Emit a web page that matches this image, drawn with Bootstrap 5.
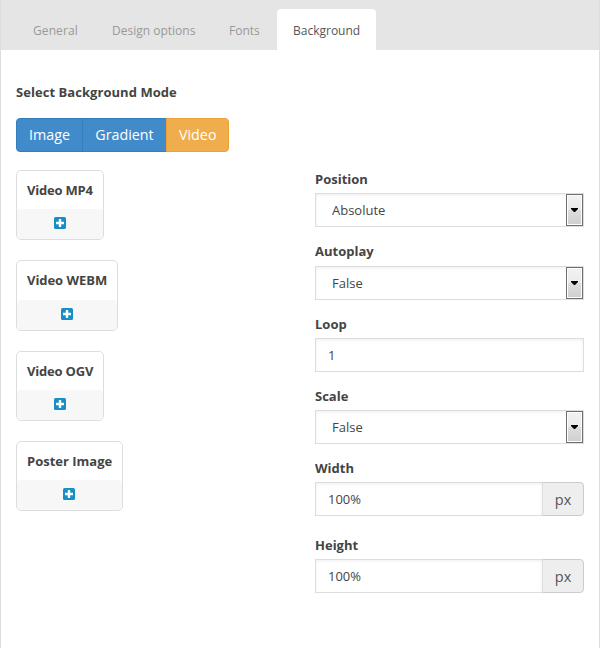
<!DOCTYPE html>
<html lang="en">
<head>
<meta charset="utf-8">
<meta name="viewport" content="width=device-width, initial-scale=1">
<title>Background settings</title>
<link href="https://cdn.jsdelivr.net/npm/bootstrap@5.3.0/dist/css/bootstrap.min.css" rel="stylesheet">
<style>
body { font-family: "Open Sans", sans-serif; font-size: 13px; line-height: 20px; color: #444; background: #fff; }
.panel { height: 648px; border: solid #ddd; border-width: 0 1px; overflow: hidden; }
.tabs-bar { height: 50px; background: #e5e5e5; padding: 9px 16px 0; gap: 2px; border: 0; }
.tabs-bar .nav-link { height: 41px; border: 0; margin: 0; padding: 12px 16px 0; color: #999; border-radius: 4px 4px 0 0; font-size: 12px; line-height: 20px; white-space: nowrap; }
.tabs-bar .nav-link:first-child { width: 77px; letter-spacing: .1px; }
.tabs-bar .nav-link:nth-child(2) { width: 115px; }
.tabs-bar .nav-link:nth-child(3) { width: 62px; }
.tabs-bar .nav-link.active { width: 99px; color: #555; background: #fff; }
.panel-body { padding: 32px 15px 0; }
.heading { letter-spacing: .05px; }
.mode-group { margin: 16px 0 18px; height: 34px; }
.mode-group .btn { font-size: 14.3px; line-height: 20px; padding: 6px 12px; color: #fff; border-radius: 4px; }
.mode-group .btn:nth-child(2) { width: 85px; }
.btn-mode { --bs-btn-bg: #428bca; --bs-btn-border-color: #357ebd; --bs-btn-hover-bg: #3276b1; }
.btn-mode-on { --bs-btn-bg: #f0ad4e; --bs-btn-border-color: #eea236; --bs-btn-hover-bg: #ed9c28; }
.sources { width: 299px; gap: 20px; }
.source { height: 70px; border: 1px solid #ddd; border-radius: 5px; overflow: hidden; }
.source-narrow { width: 88px; letter-spacing: -.2px; }
.source-tall { width: 102px; height: 71px; letter-spacing: -.05px; }
.source-title { height: 38px; padding: 9px 10px 0; line-height: 20px; white-space: nowrap; }
.source-tall .source-title { height: 39px; }
.source-add { background: #f7f7f7; border-radius: 4px 4px 0 0; padding-bottom: 2px; }
.source:last-child .source-add { padding-right: 1px; }
.fields { width: 269px; }
.field { margin-bottom: 15px; }
.field-wide { margin-bottom: 20px; }
.field label { display: block; height: 23px; line-height: 18px; font-weight: 700; }
.field .label-tall { height: 24px; }
.field .form-control, .pick { height: 34px; border: 1px solid #ddd; border-radius: 0; background: #fff; box-shadow: inset 0 1px 3px rgba(0,0,0,.07); }
.field .form-control { font-size: 13px; line-height: 20px; padding: 6px 12px; color: #444; }
.pick select { appearance: none; border: 0; outline: 0; background: transparent; color: #444; padding: 0 16px; }
.pick-arrow { width: 17px; border: 1px solid #707070; background: linear-gradient(#f2f2f2 0, #ebebeb 50%, #dddddd 50%, #cfcfcf 100%); box-shadow: inset 0 0 0 1px #fcfcfc; }
.unit { width: 42px; font-size: 14.5px; padding: 1px 0 0; justify-content: center; color: #555; background: #eee; border: 1px solid #ccc; border-radius: 0 4px 4px 0; }
.field .input-group { height: 34px; }
</style>
</head>
<body>
<main class="panel">
  <nav class="nav nav-tabs tabs-bar flex-nowrap">
    <a class="nav-link" href="#">General</a>
    <a class="nav-link" href="#">Design options</a>
    <a class="nav-link" href="#">Fonts</a>
    <a class="nav-link active" href="#">Background</a>
  </nav>
  <section class="panel-body">
    <div class="fw-bold heading">Select Background Mode</div>
    <div class="btn-group mode-group">
      <button type="button" class="btn btn-mode">Image</button>
      <button type="button" class="btn btn-mode">Gradient</button>
      <button type="button" class="btn btn-mode-on">Video</button>
    </div>
    <div class="d-flex align-items-start">
      <div class="sources d-flex flex-column align-items-start">
        <div class="source source-narrow d-flex flex-column">
          <div class="source-title fw-bold">Video MP4</div>
          <div class="source-add flex-grow-1 d-flex align-items-center justify-content-center"><svg width="12" height="12" viewBox="0 0 12 12"><rect width="12" height="12" rx="1.6" fill="#158fc5"/><path d="M4.8 2h2.4v2.8H10v2.4H7.2V10H4.8V7.2H2V4.8h2.8z" fill="#fff"/></svg></div>
        </div>
        <div class="source source-tall d-flex flex-column">
          <div class="source-title fw-bold">Video WEBM</div>
          <div class="source-add flex-grow-1 d-flex align-items-center justify-content-center"><svg width="12" height="12" viewBox="0 0 12 12"><rect width="12" height="12" rx="1.6" fill="#158fc5"/><path d="M4.8 2h2.4v2.8H10v2.4H7.2V10H4.8V7.2H2V4.8h2.8z" fill="#fff"/></svg></div>
        </div>
        <div class="source source-narrow d-flex flex-column">
          <div class="source-title fw-bold">Video OGV</div>
          <div class="source-add flex-grow-1 d-flex align-items-center justify-content-center"><svg width="12" height="12" viewBox="0 0 12 12"><rect width="12" height="12" rx="1.6" fill="#158fc5"/><path d="M4.8 2h2.4v2.8H10v2.4H7.2V10H4.8V7.2H2V4.8h2.8z" fill="#fff"/></svg></div>
        </div>
        <div class="source d-flex flex-column">
          <div class="source-title fw-bold">Poster Image</div>
          <div class="source-add flex-grow-1 d-flex align-items-center justify-content-center"><svg width="12" height="12" viewBox="0 0 12 12"><rect width="12" height="12" rx="1.6" fill="#158fc5"/><path d="M4.8 2h2.4v2.8H10v2.4H7.2V10H4.8V7.2H2V4.8h2.8z" fill="#fff"/></svg></div>
        </div>
      </div>
      <div class="fields">
        <div class="field">
          <label for="position">Position</label>
          <div class="pick d-flex"><select id="position" class="flex-grow-1"><option>Absolute</option></select><span class="pick-arrow d-flex align-items-center justify-content-center"><svg width="7" height="4" viewBox="0 0 7 4"><path d="M0 0h7v1L4 4H3L0 1z"/></svg></span></div>
        </div>
        <div class="field">
          <label for="autoplay" class="label-tall">Autoplay</label>
          <div class="pick d-flex"><select id="autoplay" class="flex-grow-1"><option>False</option></select><span class="pick-arrow d-flex align-items-center justify-content-center"><svg width="7" height="4" viewBox="0 0 7 4"><path d="M0 0h7v1L4 4H3L0 1z"/></svg></span></div>
        </div>
        <div class="field">
          <label for="loop">Loop</label>
          <input id="loop" class="form-control" value="1">
        </div>
        <div class="field">
          <label for="scale">Scale</label>
          <div class="pick d-flex"><select id="scale" class="flex-grow-1"><option>False</option></select><span class="pick-arrow d-flex align-items-center justify-content-center"><svg width="7" height="4" viewBox="0 0 7 4"><path d="M0 0h7v1L4 4H3L0 1z"/></svg></span></div>
        </div>
        <div class="field field-wide">
          <label for="width">Width</label>
          <div class="input-group"><input id="width" class="form-control" value="100%"><span class="input-group-text unit">px</span></div>
        </div>
        <div class="field">
          <label for="height">Height</label>
          <div class="input-group"><input id="height" class="form-control" value="100%"><span class="input-group-text unit">px</span></div>
        </div>
      </div>
    </div>
  </section>
</main>
<script src="https://cdn.jsdelivr.net/npm/bootstrap@5.3.0/dist/js/bootstrap.bundle.min.js"></script>
</body>
</html>
